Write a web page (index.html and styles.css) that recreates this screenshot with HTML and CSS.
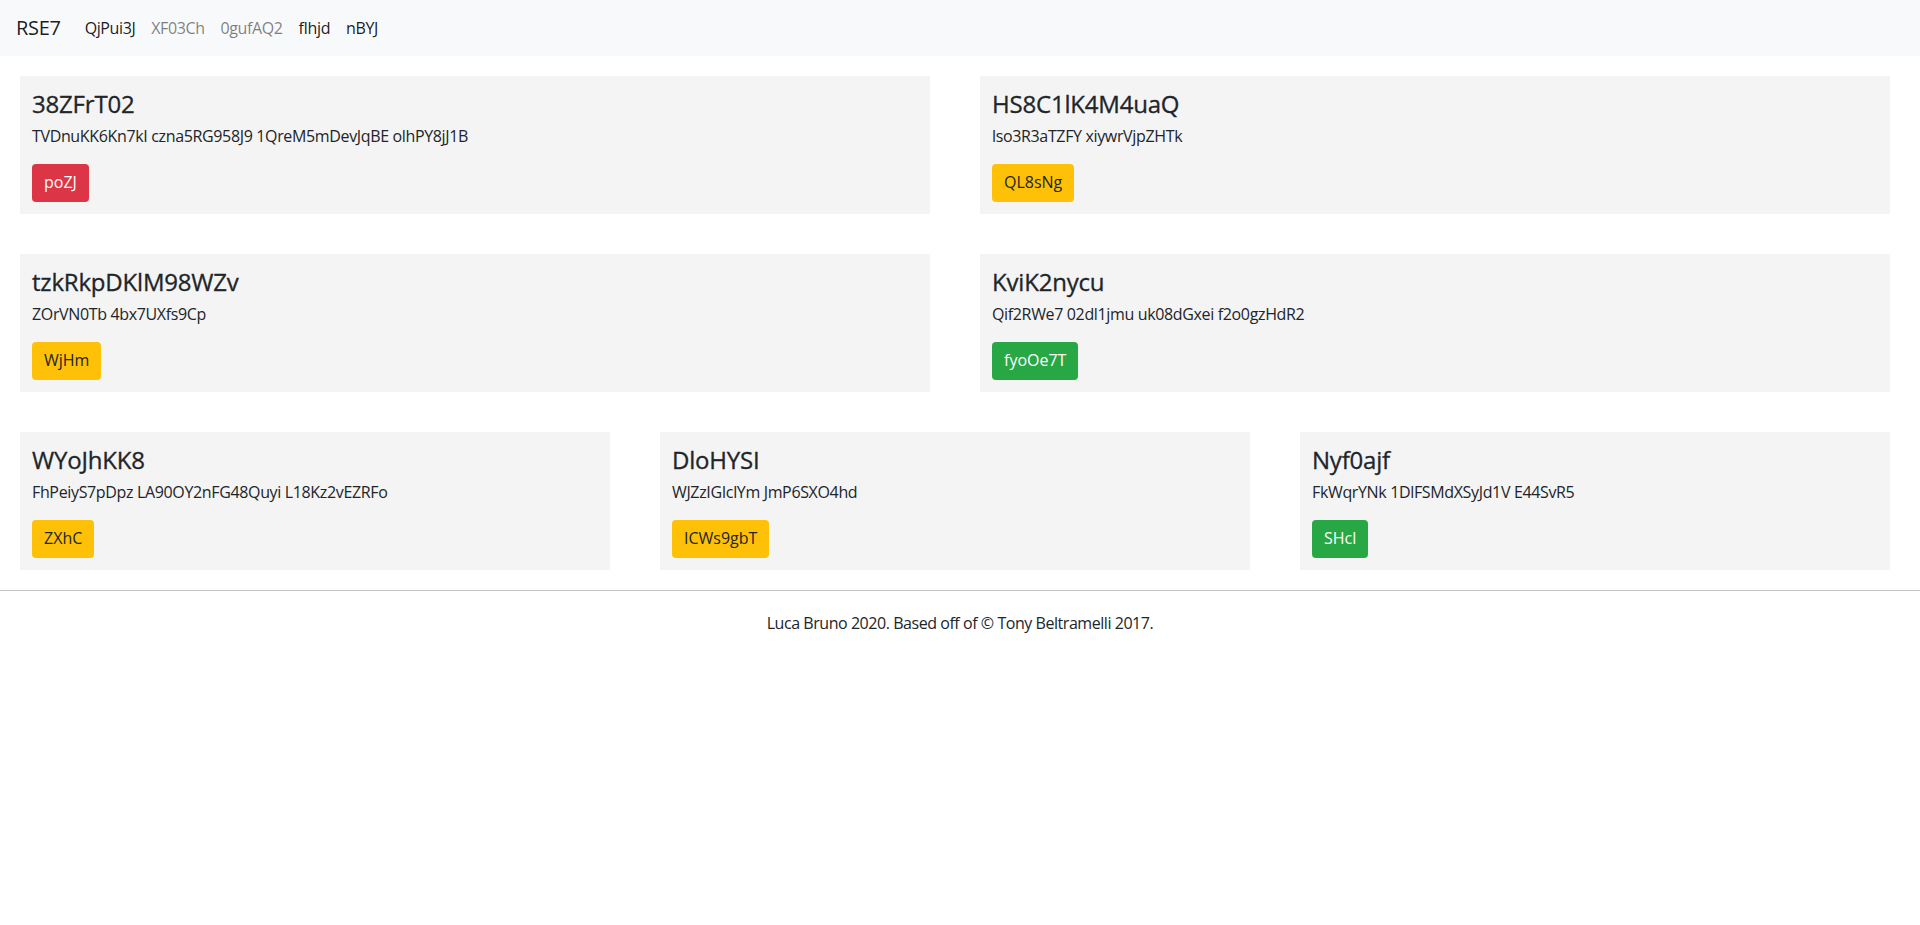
FILE: index.html
```html
<!DOCTYPE html>
<html>
<head>
<meta charset="utf-8">
<link rel="stylesheet" href="styles.css">
</head>
<body>
<header class="navbar">
  <a class="brand" href="#">RSE7</a>
  <nav class="nav">
    <a class="nav-link on" href="#">QjPui3J</a>
    <a class="nav-link" href="#">XF03Ch</a>
    <a class="nav-link" href="#">0gufAQ2</a>
    <a class="nav-link on" href="#">fIhjd</a>
    <a class="nav-link on" href="#">nBYJ</a>
  </nav>
</header>
<main class="main">
  <div class="row two">
    <div class="card">
      <h4 class="title">38ZFrT02</h4>
      <p class="text">TVDnuKK6Kn7kI czna5RG958J9 1QreM5mDevJqBE olhPY8jJ1B</p>
      <a class="btn danger" href="#">poZJ</a>
    </div>
    <div class="card">
      <h4 class="title">HS8C1lK4M4uaQ</h4>
      <p class="text">lso3R3aTZFY xiywrVjpZHTk</p>
      <a class="btn warning" href="#">QL8sNg</a>
    </div>
  </div>
  <div class="row two">
    <div class="card">
      <h4 class="title">tzkRkpDKlM98WZv</h4>
      <p class="text">ZOrVN0Tb 4bx7UXfs9Cp</p>
      <a class="btn warning" href="#">WjHm</a>
    </div>
    <div class="card">
      <h4 class="title">KviK2nycu</h4>
      <p class="text">Qif2RWe7 02dl1jmu uk08dGxei f2o0gzHdR2</p>
      <a class="btn success" href="#">fyoOe7T</a>
    </div>
  </div>
  <div class="row three">
    <div class="card">
      <h4 class="title">WYoJhKK8</h4>
      <p class="text">FhPeiyS7pDpz LA90OY2nFG48Quyi L18Kz2vEZRFo</p>
      <a class="btn warning" href="#">ZXhC</a>
    </div>
    <div class="card">
      <h4 class="title">DloHYSI</h4>
      <p class="text">WJZzIGIclYm JmP6SXO4hd</p>
      <a class="btn warning" href="#">ICWs9gbT</a>
    </div>
    <div class="card">
      <h4 class="title">Nyf0ajf</h4>
      <p class="text">FkWqrYNk 1DlFSMdXSyJd1V E44SvR5</p>
      <a class="btn success" href="#">SHcl</a>
    </div>
  </div>
</main>
<footer class="footer">
  <p>Luca Bruno 2020. Based off of © Tony Beltramelli 2017.</p>
</footer>
</body>
</html>
```

FILE: styles.css
```css
* { box-sizing: border-box; }
html, body { margin: 0; padding: 0; }
body {
  font-family: "Open Sans", "Noto Sans", sans-serif;
  font-size: 16px;
  line-height: 1.5;
  color: #212529;
  background: #fff;
}
a { text-decoration: none; }

.navbar {
  display: flex;
  align-items: center;
  height: 56px;
  padding: 8px 16px;
  background: #f8f9fa;
}
.brand {
  font-size: 20px;
  line-height: 30px;
  color: rgba(0,0,0,.9);
  margin-right: 16px;
  letter-spacing: -0.3px;
}
.nav { display: flex; }
.nav-link {
  padding: 8px;
  line-height: 24px;
  color: rgba(0,0,0,.5);
  letter-spacing: -0.4px;
}
.nav-link.on { color: rgba(0,0,0,.9); }

.main {
  padding-top: 20px;
  display: flex;
  flex-direction: column;
  gap: 40px;
}
.row { display: grid; }
.row.two { grid-template-columns: 1fr 1fr; }
.row.three { grid-template-columns: 1fr 1fr 1fr; }

.card {
  margin: 0 30px 0 20px;
  background: #f4f4f4;
  padding: 13px 12px 12px 12px;
  display: flex;
  flex-direction: column;
  align-items: flex-start;
}
.title {
  margin: 0 0 6px 0;
  font-size: 24px;
  line-height: 29px;
  font-weight: 500;
  letter-spacing: -0.2px;
  -webkit-text-stroke: 0.3px #212529;
}
.text {
  margin: 0 0 16px 0;
  font-size: 16px;
  line-height: 24px;
  letter-spacing: -0.35px;
  color: #212529;
}
.btn {
  display: inline-block;
  padding: 6px 12px;
  font-size: 16px;
  line-height: 24px;
  height: 38px;
  border-radius: 4px;
  letter-spacing: 0;
}
.btn.danger { background: #dc3545; color: #fff; }
.btn.warning { background: #ffc107; color: #212529; }
.btn.success { background: #28a745; color: #fff; }

.footer {
  margin-top: 20px;
  border-top: 1px solid #c4c4c4;
  text-align: center;
}
.footer p {
  margin: 20px 0 0 0;
  font-size: 16px;
  line-height: 24px;
  letter-spacing: -0.45px;
}
```
